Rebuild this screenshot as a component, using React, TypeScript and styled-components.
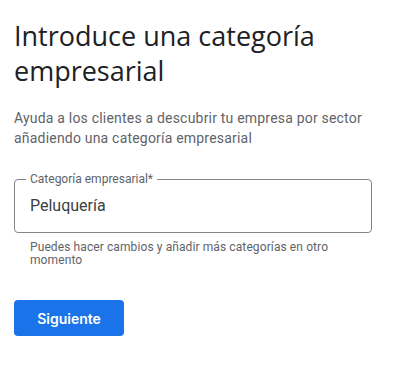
import React, { useState } from 'react';
import styled, { createGlobalStyle } from 'styled-components';

const GlobalStyle = createGlobalStyle`
    body {
        margin: 0;
        background: #ffffff;
        font-family: Roboto, "Liberation Sans", Arial, sans-serif;
    }
`

const Page = styled.div`
    width: 358px;
    padding: 18px 0 0 14px;
`

const Title = styled.h1`
    margin: 0;
    font-family: "Open Sans", Roboto, sans-serif;
    font-size: 27px;
    line-height: 35px;
    font-weight: 400;
    color: #202124;
`

const Subtitle = styled.p`
    margin: 20px 0 0;
    font-size: 14px;
    line-height: 20px;
    letter-spacing: 0.2px;
    color: #5f6368;
`

const Field = styled.fieldset`
    margin: 24px 0 0;
    padding: 8px 11px 14px;
    border: 1px solid #80868b;
    border-radius: 4px;
`

const Label = styled.legend`
    padding: 0 4px;
    font-size: 12px;
    line-height: 14px;
    color: #5f6368;
`

const ValueInput = styled.input`
    display: block;
    width: 100%;
    box-sizing: border-box;
    height: 24px;
    padding: 0 4px;
    border: none;
    outline: none;
    font-family: inherit;
    font-size: 16px;
    line-height: 24px;
    color: #3c4043;
    background: transparent;
`

const Helper = styled.p`
    margin: 8px 0 0;
    padding-left: 16px;
    font-size: 12px;
    line-height: 13px;
    letter-spacing: 0.1px;
    color: #5f6368;
`

const PrimaryButton = styled.button`
    margin-top: 33px;
    width: 110px;
    height: 36px;
    border: none;
    border-radius: 4px;
    background: #1a73e8;
    color: #ffffff;
    font-family: Inter, Roboto, sans-serif;
    font-size: 14px;
    font-weight: 600;
    cursor: pointer;
`

export default function App() {
    const [category, setCategory] = useState("Peluquería");

    return <>
        <GlobalStyle />
        <Page>
            <Title>Introduce una categoría empresarial</Title>
            <Subtitle>Ayuda a los clientes a descubrir tu empresa por sector añadiendo una categoría empresarial</Subtitle>
            <Field>
                <Label>Categoría empresarial*</Label>
                <ValueInput value={category} onChange={e => setCategory(e.target.value)} />
            </Field>
            <Helper>Puedes hacer cambios y añadir más categorías en otro momento</Helper>
            <PrimaryButton>Siguiente</PrimaryButton>
        </Page>
    </>
}
